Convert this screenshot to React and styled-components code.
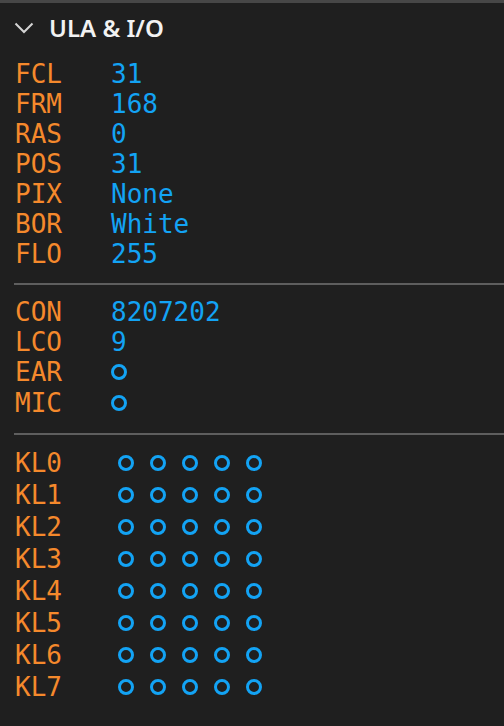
import React from "react";
import styled, { createGlobalStyle } from "styled-components";

const GlobalStyle = createGlobalStyle`
  html, body {
    margin: 0;
    padding: 0;
    background: #1f1f1f;
  }
`;

const ORANGE = "#f5892c";
const BLUE = "#13a3f4";

const mainRows = [
  ["FCL", "31"],
  ["FRM", "168"],
  ["RAS", "0"],
  ["POS", "31"],
  ["PIX", "None"],
  ["BOR", "White"],
  ["FLO", "255"],
];

const keyRows = ["KL0", "KL1", "KL2", "KL3", "KL4", "KL5", "KL6", "KL7"];

function App() {
  return (
    <>
      <GlobalStyle />
      <Panel>
        <Header>
          <Chevron viewBox="0 0 20 12">
            <path d="M1.5 1.5 L10 10 L18.5 1.5" />
          </Chevron>
          <Title>ULA &amp; I/O</Title>
        </Header>
        <Section $top={8}>
          {mainRows.map(([label, value]) => (
            <Row key={label}>
              <Label>{label}</Label>
              <Value>{value}</Value>
            </Row>
          ))}
        </Section>
        <Divider />
        <Section>
          <Row>
            <Label>CON</Label>
            <Value>8207202</Value>
          </Row>
          <Row>
            <Label>LCO</Label>
            <Value>9</Value>
          </Row>
          <Row>
            <Label>EAR</Label>
            <Dots>
              <Dot />
            </Dots>
          </Row>
          <Row $tall>
            <Label>MIC</Label>
            <Dots>
              <Dot />
            </Dots>
          </Row>
        </Section>
        <Divider />
        <Section>
          {keyRows.map((label) => (
            <Row key={label} $tall>
              <Label>{label}</Label>
              <Dots $indent>
                {[0, 1, 2, 3, 4].map((i) => (
                  <Dot key={i} />
                ))}
              </Dots>
            </Row>
          ))}
        </Section>
      </Panel>
    </>
  );
}

const Panel = styled.div`
  width: 504px;
  min-height: 726px;
  box-sizing: border-box;
  background: #1f1f1f;
  border-top: 3px solid #474747;
  padding-bottom: 20px;
`;

const Header = styled.div`
  display: flex;
  align-items: center;
  height: 48px;
  padding-left: 14px;
  gap: 15px;
`;

const Chevron = styled.svg`
  width: 20px;
  height: 12px;
  fill: none;
  stroke: #d4d4d4;
  stroke-width: 2;
  margin-top: 1px;
`;

const Title = styled.div`
  font-family: "Noto Sans", "Open Sans", sans-serif;
  font-weight: 600;
  font-size: 24px;
  color: #f2f2f2;
`;

const Section = styled.div`
  display: flex;
  flex-direction: column;
  padding: ${(p) => p.$top ?? 12}px 0 0 15px;
`;

const Row = styled.div`
  display: grid;
  grid-template-columns: 96px 1fr;
  align-items: center;
  height: ${(p) => (p.$tall ? "32px" : "30px")};
  font-family: "DejaVu Sans Mono", "Liberation Mono", monospace;
  font-size: 26px;
  line-height: 30px;
`;

const Label = styled.span`
  color: ${ORANGE};
`;

const Value = styled.span`
  color: ${BLUE};
`;

const Dots = styled.div`
  display: flex;
  gap: 16px;
  padding-left: ${(p) => (p.$indent ? "7px" : "0")};
`;

const Dot = styled.span`
  width: 16px;
  height: 16px;
  box-sizing: border-box;
  border: 3px solid ${BLUE};
  border-radius: 50%;
`;

const Divider = styled.hr`
  margin: 14px 0 0 14px;
  border: none;
  height: 2px;
  background: #5e5e5e;
`;

export default App;
